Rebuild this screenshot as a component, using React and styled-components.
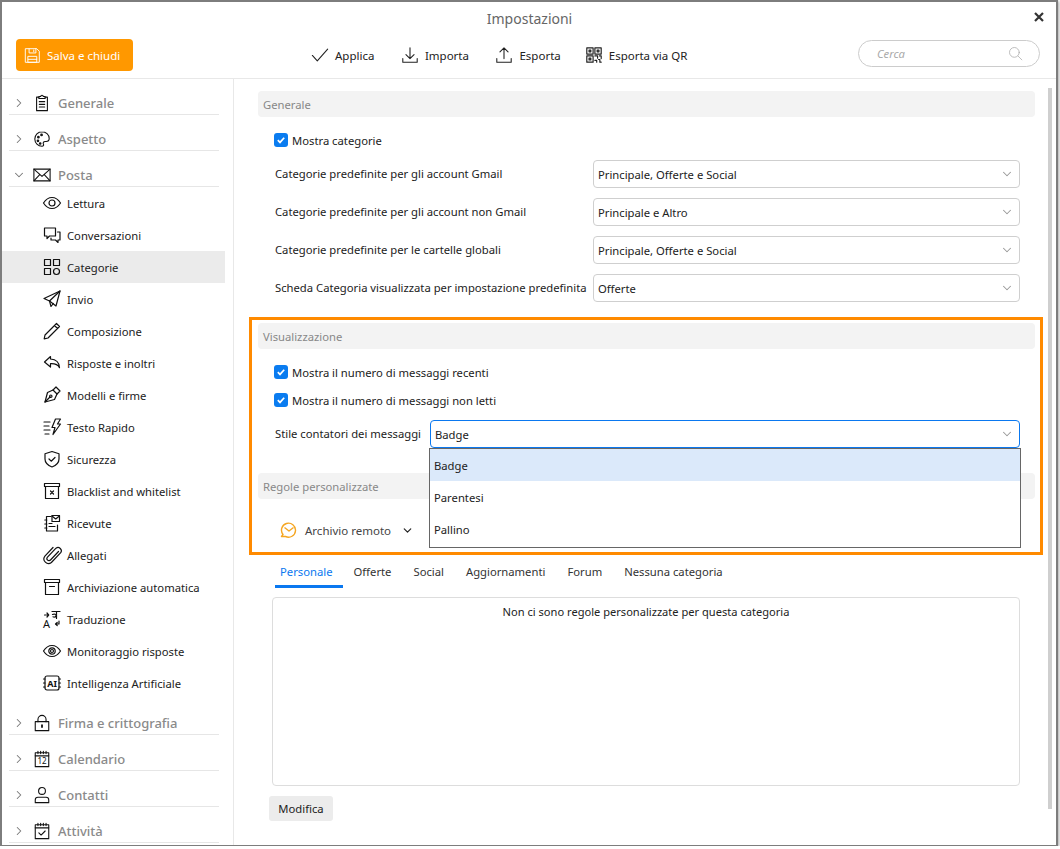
import React from 'react';
import styled, { createGlobalStyle } from 'styled-components';
import { ChevronRight, ChevronDown } from 'lucide-react';

const Global = createGlobalStyle`
  html, body { margin: 0; padding: 0; background: #fff; }
  body { font-family: "Noto Sans", "Open Sans", sans-serif; font-size: 11.25px; color: #222; }
  * { box-sizing: border-box; }
`;

const Window = styled.div`
  position: relative;
  width: 1058px;
  height: 846px;
  border: 2px solid #7d7d7d;
  border-width: 2px 2px 1px 2px;
  background: #fff;
  box-shadow: 1px 1px 3px rgba(0, 0, 0, 0.35);
  display: flex;
  flex-direction: column;
  overflow: hidden;
`;
const Header = styled.header`
  flex: none;
  border-bottom: 1px solid #e8e8e8;
  height: 77px;
`;
const TitleRow = styled.div`
  height: 32px;
  display: flex;
  align-items: center;
  justify-content: center;
  position: relative;
`;
const Title = styled.h1`
  margin: 0 0 0 1px;
  font-size: 14px;
  font-weight: 400;
  color: #666;
`;
const Close = styled.span`
  position: absolute;
  right: 11px;
  top: 9px;
  width: 12px;
  height: 12px;
  display: flex;
  color: #333;
`;
const Toolbar = styled.div`
  margin-top: 5px;
  height: 32px;
  display: flex;
  align-items: center;
  padding-left: 14px;
`;
const SaveButton = styled.button`
  width: 117px;
  height: 32px;
  border: 0;
  border-radius: 4px;
  background: #ff9800;
  color: #fff;
  font: inherit;
  font-size: 11.5px;
  display: flex;
  align-items: center;
  gap: 6px;
  padding: 0 0 0 8px;
`;
const Tools = styled.div`
  margin-left: 178px;
  display: flex;
  gap: 26.5px;
  font-size: 11.5px;
`;
const Tool = styled.span`
  display: flex;
  align-items: center;
  gap: 6px;
  color: #222;
  &:last-child { margin-left: -2.5px; }
`;
const Search = styled.div`
  margin-left: auto;
  margin-right: 16px;
  margin-top: -3px;
  width: 182px;
  height: 27px;
  border: 1px solid #ccc;
  border-radius: 14px;
  display: flex;
  align-items: center;
  justify-content: space-between;
  padding: 0 16px 0 18px;
  color: #aaa;
  font-style: italic;
`;
const Body = styled.div`
  flex: 1;
  min-height: 0;
  display: flex;
`;
const Sidebar = styled.nav`
  flex: none;
  width: 232px;
  border-right: 1px solid #e8e8e8;
  padding-right: 8px;
`;
const SectionHead = styled.div`
  height: 36px;
  margin: 0 6px 0 7px;
  padding: 13px 0 0 3px;
  border-bottom: 1px solid #e6e6e6;
  display: flex;
  align-items: center;
  color: #8a8a8a;
  font-size: 13px;
  font-weight: 500;
  svg { flex: none; }
`;
const Arrow = styled.span`
  width: 21px;
  display: flex;
  color: #777;
`;
const HeadIcon = styled.span`
  width: 25px;
  display: flex;
  color: #111;
`;
const Item = styled.div`
  height: 32px;
  padding-left: 40px;
  display: flex;
  align-items: center;
  gap: 5px;
  background: ${p => (p.$active ? '#ebebeb' : 'transparent')};
  color: #222;
`;
const ItemIcon = styled.span`
  width: 20px;
  height: 20px;
  display: flex;
  color: #111;
`;
const Main = styled.main`
  flex: 1;
  min-width: 0;
  padding: 12px 21px 0 24px;
`;
const Bar = styled.div`
  height: 26px;
  background: #f3f3f3;
  border-radius: 4px;
  padding-left: 5px;
  display: flex;
  align-items: center;
  color: #888;
  margin-top: ${p => p.$top || 0}px;
`;
const CheckRow = styled.label`
  height: 28px;
  padding-left: 16px;
  display: flex;
  align-items: center;
  gap: 4px;
  margin-top: ${p => p.$top || 0}px;
`;
const Box = styled.span`
  width: 14px;
  height: 14px;
  border-radius: 3px;
  background: #0a7cf0;
  display: flex;
  align-items: center;
  justify-content: center;
`;
const FieldRow = styled.div`
  height: 28px;
  padding: 0 15px 0 17px;
  display: flex;
  align-items: center;
  gap: 10px;
  margin-top: ${p => p.$top || 0}px;
`;
const FieldLabel = styled.span`
  flex: none;
  width: ${p => p.$width}px;
  white-space: nowrap;
  padding-bottom: 2px;
`;
const Select = styled.div`
  position: relative;
  flex: 1;
  height: 28px;
  border: 1px solid ${p => (p.$open ? '#0a78f0' : '#cfcfcf')};
  border-radius: 4px;
  padding-left: 4px;
  display: flex;
  align-items: center;
  justify-content: space-between;
  color: #222;
`;
const SelectArrow = styled.span`
  display: flex;
  margin-right: 5px;
  color: #999;
`;
const Dropdown = styled.ul`
  position: absolute;
  left: -2px;
  right: -2px;
  top: 27px;
  margin: 0;
  padding: 0 0 2px;
  list-style: none;
  border: 1px solid #666;
  background: #fff;
  z-index: 2;
`;
const Option = styled.li`
  height: 32px;
  padding-left: 4px;
  display: flex;
  align-items: center;
  background: ${p => (p.$active ? '#dbe9fa' : '#fff')};
`;
const Highlight = styled.section`
  margin: 15px -8px 0 -9px;
  border: 3px solid #ff8a00;
  padding: 3px 5px 8px 6px;
`;
const Archive = styled.div`
  height: 28px;
  margin-top: 17px;
  padding-left: 22px;
  display: flex;
  align-items: center;
  color: #444;
  gap: 7px;
  font-size: 11.5px;
`;
const ArchiveArrow = styled.span`
  display: flex;
  margin-left: 3px;
  color: #222;
`;
const Tabs = styled.div`
  margin: 5px 0 0 17px;
  display: flex;
  height: 28px;
`;
const Tab = styled.span`
  padding: 0 11px 3px;
  display: flex;
  align-items: center;
  border-bottom: 3px solid ${p => (p.$active ? '#0a78f0' : 'transparent')};
  color: ${p => (p.$active ? '#0a78f0' : '#333')};
  &:first-child { padding-left: 5px; padding-right: 10px; }
`;
const RulesBox = styled.div`
  margin: 9px 15px 0 14px;
  height: 189px;
  border: 1px solid #ddd;
  border-radius: 4px;
  padding-top: 6px;
  text-align: center;
  color: #222;
  font-size: 11.1px;
`;
const Modify = styled.button`
  display: block;
  margin: 10px 0 0 11px;
  width: 64px;
  height: 25px;
  border: 0;
  border-radius: 3px;
  background: #ececec;
  color: #222;
  font: inherit;
  padding: 0;
`;
const Thumb = styled.div`
  position: absolute;
  right: 4px;
  top: 86px;
  width: 4px;
  height: 721px;
  background: #cfcfcf;
`;
const SvgBase = styled.svg`
  display: block;
  flex: none;
  fill: none;
  stroke: currentColor;
  stroke-width: ${p => p.$w || 1.2};
  stroke-linecap: round;
  stroke-linejoin: round;
`;
const Glyph = styled.text`
  fill: currentColor;
  stroke: none;
  font-family: "Noto Sans", sans-serif;
  font-weight: ${p => (p.$bold ? 700 : 400)};
`;

const I = ({ size = 20, w, children }) => (
  <SvgBase width={size} height={size} viewBox="0 0 20 20" $w={w}>{children}</SvgBase>
);

const icons = {
  clipboard: <><path d="M6.5 3.500H4v15h12v-15h-2.500" /><path d="M6.500 5V2.800h2.100a1.400 1.400 0 0 1 2.800 0h2.100V5z" /><path d="M7 8.500h6M7 11.500h6M7 14.500h6" /></>,
  palette: <><path d="M10 2a8 8 0 1 0 0 16c1.700 0 2.200-1.100 1.600-2.200-.8-1.500.1-3 1.900-3h1c1.500 0 3.500-.8 3.500-3.300C18 5 14.300 2 10 2z" /><circle cx="6" cy="8" r=".9" fill="currentColor" /><circle cx="9.500" cy="5.500" r=".9" fill="currentColor" /><circle cx="5.500" cy="12" r=".9" fill="currentColor" /><circle cx="8" cy="15" r=".9" fill="currentColor" /></>,
  mail: <><rect x="1" y="3.500" width="18" height="13" /><path d="M1 3.500l9 8 9-8M1 16.500l6.500-7M19 16.500l-6.500-7" /></>,
  eye: <><path d="M1.500 10S5 4.500 10 4.500 18.500 10 18.500 10 15 15.500 10 15.500 1.500 10 1.500 10z" /><circle cx="10" cy="10" r="3" /></>,
  chat: <><path d="M2.500 3h11v8H7.500L5 13.500V11H2.500z" /><path d="M15.500 7h2.500v8h-2v2.500L13.500 15H9v-2" /></>,
  grid: <><rect x="2.500" y="2.500" width="6" height="6" /><rect x="11.500" y="2.500" width="6" height="6" /><rect x="2.500" y="11.500" width="6" height="6" /><circle cx="14.500" cy="14.500" r="3" /></>,
  send: <><path d="M18 2L2 9.500l5.500 2.500L14 17z" /><path d="M18 2L7.500 12 9 17.500l2.300-3" /></>,
  pencil: <path d="M14.500 2.500l3 3L6 17l-3.800.800L3 14z M12.500 4.500l3 3" />,
  reply: <path d="M8.500 3.500L2.500 9l6 5v-3.300c4-.2 7.300.5 9 4-.2-5-3.500-8.300-9-8.700z" />,
  pen: <><path d="M11 5l4 4-2.500 5.500L3 17l2.500-9.500z" /><path d="M3 17l5-5" /><circle cx="8.800" cy="11.200" r="1.200" /><path d="M11 5l3-3 4 4-3 3" /></>,
  quick: <><path d="M2 5h6M2 9h5M2 13h6M3 17h4" /><path d="M13.500 2h5l-3 5h3L11 17.500l2-7h-3z" /></>,
  shield: <><path d="M10 2.500l7 2.200v5.300c0 4-3 6.500-7 8-4-1.500-7-4-7-8V4.700z" /><path d="M7 10l2.200 2.200L13 8.500" /></>,
  blacklist: <><rect x="2.500" y="2.500" width="15" height="3" /><path d="M3.500 5.500v12h13v-12" /><path d="M8.500 10l3 3M11.500 10l-3 3" /></>,
  receipt: <><path d="M9 3.500H4.500V18h11v-6" /><rect x="10" y="2.500" width="7.500" height="6" /><path d="M10 3l3.700 3 3.700-3M7 10.500h3M7 13.500h6M2.800 7h2M2.800 11h2M2.800 15h2" /></>,
  clip: <path d="M16.500 6.500l-8 8.500a2 2 0 0 1-3-2.800l8.500-9a3.300 3.300 0 0 1 4.700 4.500l-9.300 9.800a4.600 4.600 0 0 1-6.500-6.400L11 2.500" />,
  archive: <><rect x="2.500" y="2.500" width="15" height="3" /><path d="M3.500 5.500v12h13v-12M7.500 9.500h5" /></>,
  translate: <><path d="M2.500 6h4M5 4l1.700 2L5 8M13.500 15H17v-3M13.500 15l1.700-1.500M13.500 15l1.700 1.500M10 2.500h8M14.500 2.500v7M10.500 5.500c2-.8 4-.2 3.500 1.500-.3 1-1.800 1.300-3 .8" /><Glyph x="1" y="18.500" fontSize="11">A</Glyph></>,
  watch: <><path d="M1.500 10S5 4.500 10 4.500 18.500 10 18.500 10 15 15.500 10 15.500 1.500 10 1.500 10z" /><circle cx="10" cy="10" r="3.200" /><circle cx="10" cy="10" r="1.500" /></>,
  ai: <><rect x="3" y="3" width="14" height="14" rx="2" /><path d="M1.500 6h1.500M1.500 10h1.500M1.500 14h1.500M17 6h1.500M17 10h1.500M17 14h1.500" /><Glyph x="5.300" y="13.500" fontSize="9" $bold>AI</Glyph></>,
  lock: <><rect x="2.500" y="8.500" width="15" height="10" /><path d="M5.500 8.500V6a4.500 4.500 0 0 1 9 0v2.500" /><path d="M10 12.500v2" strokeWidth="2" /></>,
  cal12: <><rect x="2.500" y="3" width="15" height="15.500" /><path d="M2.500 6.500h15M5.500 1.500V4M8.500 1.500V4M11.500 1.500V4M14.500 1.500V4" /><Glyph x="5" y="16" fontSize="9">12</Glyph></>,
  user: <><circle cx="10" cy="5.500" r="3.800" /><path d="M2.500 18.500v-3a3 3 0 0 1 3-3h9a3 3 0 0 1 3 3v3z" /></>,
  task: <><rect x="2.500" y="3" width="15" height="15.500" /><path d="M2.500 6.500h15M5.500 1.500V4M8.500 1.500V4M11.500 1.500V4M14.500 1.500V4M6.500 12l2.500 2.500L13.500 10" /></>,
};

const Head = ({ icon, open, children }) => (
  <SectionHead>
    <Arrow>{open ? <ChevronDown size={14} strokeWidth={1.800} /> : <ChevronRight size={14} strokeWidth={1.800} />}</Arrow>
    <HeadIcon><I size={18}>{icons[icon]}</I></HeadIcon>
    {children}
  </SectionHead>
);

const mailItems = [
  ['eye', 'Lettura'], ['chat', 'Conversazioni'], ['grid', 'Categorie'], ['send', 'Invio'],
  ['pencil', 'Composizione'], ['reply', 'Risposte e inoltri'], ['pen', 'Modelli e firme'],
  ['quick', 'Testo Rapido'], ['shield', 'Sicurezza'], ['blacklist', 'Blacklist and whitelist'],
  ['receipt', 'Ricevute'], ['clip', 'Allegati'], ['archive', 'Archiviazione automatica'],
  ['translate', 'Traduzione'], ['watch', 'Monitoraggio risposte'], ['ai', 'Intelligenza Artificiale'],
];

const Check = ({ top, children }) => (
  <CheckRow $top={top}>
    <Box>
      <svg width="10" height="10" viewBox="0 0 10 10"><path d="M1.800 5.200l2.200 2.200 4.200-4.600" fill="none" stroke="#fff" strokeWidth="1.700" /></svg>
    </Box>
    {children}
  </CheckRow>
);

const Field = ({ top, label, value }) => (
  <FieldRow $top={top}>
    <FieldLabel $width={308}>{label}</FieldLabel>
    <Select>{value}<SelectArrow><ChevronDown size={14} strokeWidth={1.800} /></SelectArrow></Select>
  </FieldRow>
);

export default function App() {
  return (
    <>
      <Global />
      <Window>
        <Header>
          <TitleRow>
            <Title>Impostazioni</Title>
            <Close>
              <svg width="12" height="12" viewBox="0 0 12 12"><path d="M2 2l8 8M10 2l-8 8" stroke="currentColor" strokeWidth="2.200" /></svg>
            </Close>
          </TitleRow>
          <Toolbar>
            <SaveButton>
              <I size={17} w={1.100}>
                <path d="M2 2h13l3 3v13H2z" /><path d="M6 2v5h8V2M11.500 3.500v2M5 11h10v7H5zM5 14.500h10" />
              </I>
              Salva e chiudi
            </SaveButton>
            <Tools>
              <Tool><I size={18}><path d="M1.500 10.500l5.500 6L18.500 3.500" /></I>Applica</Tool>
              <Tool><I size={18}><path d="M10 2v12M5.500 9.500L10 14l4.500-4.500M2 14v4h16v-4" /></I>Importa</Tool>
              <Tool><I size={18}><path d="M10 14V2M5.500 6.500L10 2l4.500 4.500M2 14v4h16v-4" /></I>Esporta</Tool>
              <Tool>
                <I size={18} w={1.300}>
                  <rect x="2" y="2" width="7" height="7" /><rect x="11" y="2" width="7" height="7" /><rect x="2" y="11" width="7" height="7" />
                  <path d="M4.500 4.500h2v2h-2zM13.500 4.500h2v2h-2zM4.500 13.500h2v2h-2zM11 11h3v2.500M16 11h2v3M11 16h2v2M15 15h1.500v3H18" />
                </I>
                Esporta via QR
              </Tool>
            </Tools>
            <Search>
              Cerca
              <I size={15} w={1}><circle cx="8.500" cy="8.500" r="6.500" /><path d="M13.500 13.500l5 5" /></I>
            </Search>
          </Toolbar>
        </Header>
        <Body>
          <Sidebar>
            <Head icon="clipboard">Generale</Head>
            <Head icon="palette">Aspetto</Head>
            <Head icon="mail" open>Posta</Head>
            {mailItems.map(([icon, label]) => (
              <Item key={label} $active={label === 'Categorie'}>
                <ItemIcon><I>{icons[icon]}</I></ItemIcon>
                {label}
              </Item>
            ))}
            <Head icon="lock">Firma e crittografia</Head>
            <Head icon="cal12">Calendario</Head>
            <Head icon="user">Contatti</Head>
            <Head icon="task">Attività</Head>
          </Sidebar>
          <Main>
            <Bar>Generale</Bar>
            <Check top={9}>Mostra categorie</Check>
            <Field top={6} label="Categorie predefinite per gli account Gmail" value="Principale, Offerte e Social" />
            <Field top={10} label="Categorie predefinite per gli account non Gmail" value="Principale e Altro" />
            <Field top={10} label="Categorie predefinite per le cartelle globali" value="Principale, Offerte e Social" />
            <Field top={10} label="Scheda Categoria visualizzata per impostazione predefinita" value="Offerte" />
            <Highlight>
              <Bar>Visualizzazione</Bar>
              <Check top={9}>Mostra il numero di messaggi recenti</Check>
              <Check>Mostra il numero di messaggi non letti</Check>
              <FieldRow $top={6}>
                <FieldLabel $width={145}>Stile contatori dei messaggi</FieldLabel>
                <Select $open>
                  Badge
                  <SelectArrow><ChevronDown size={14} strokeWidth={1.800} /></SelectArrow>
                  <Dropdown>
                    <Option $active>Badge</Option>
                    <Option>Parentesi</Option>
                    <Option>Pallino</Option>
                  </Dropdown>
                </Select>
              </FieldRow>
              <Bar $top={25}>Regole personalizzate</Bar>
              <Archive>
                <svg width="18" height="18" viewBox="0 0 18 18" fill="none" stroke="#f5a623" strokeWidth="1.400" strokeLinejoin="round">
                  <path d="M3 13.500A7 7 0 1 1 5.500 15.500H1.500z" />
                  <path d="M4.500 6.500L9 10l4.500-3.500" />
                </svg>
                Archivio remoto
                <ArchiveArrow><ChevronDown size={13} strokeWidth={2.200} /></ArchiveArrow>
              </Archive>
            </Highlight>
            <Tabs>
              <Tab $active>Personale</Tab>
              <Tab>Offerte</Tab>
              <Tab>Social</Tab>
              <Tab>Aggiornamenti</Tab>
              <Tab>Forum</Tab>
              <Tab>Nessuna categoria</Tab>
            </Tabs>
            <RulesBox>Non ci sono regole personalizzate per questa categoria</RulesBox>
            <Modify>Modifica</Modify>
          </Main>
        </Body>
        <Thumb />
      </Window>
    </>
  );
}
